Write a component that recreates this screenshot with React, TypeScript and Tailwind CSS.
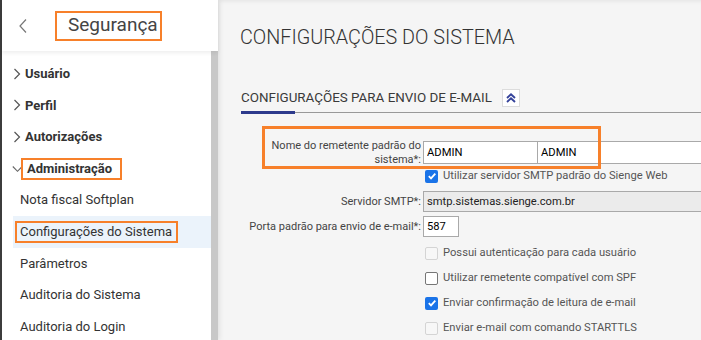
import type { ReactNode } from 'react'

const ORANGE = 'border-[#f7802a]'

function ChevronRight() {
  return (
    <svg width="8" height="12" viewBox="0 0 8 12" className="shrink-0">
      <path d="M1.5 1 L6.5 6 L1.5 11" fill="none" stroke="#555" strokeWidth="1.2" />
    </svg>
  )
}

function ChevronDown() {
  return (
    <svg width="11" height="8" viewBox="0 0 11 8" className="shrink-0">
      <path d="M0.8 1.5 L5.5 6.3 L10.2 1.5" fill="none" stroke="#666" strokeWidth="1.1" />
    </svg>
  )
}

type Check = 'on' | 'off' | 'disabled'

function Checkbox({ state }: { state: Check }) {
  if (state === 'on') {
    return (
      <span className="flex h-[13px] w-[13px] items-center justify-center rounded-[2px] bg-[#1a73e8]">
        <svg width="10" height="10" viewBox="0 0 10 10">
          <path d="M1.8 5.2 L4 7.4 L8.3 2.6" fill="none" stroke="#fff" strokeWidth="1.8" />
        </svg>
      </span>
    )
  }
  if (state === 'disabled') {
    return <span className="h-[13px] w-[13px] rounded-[2px] border border-[#d4d4d4] bg-[#f7f7f7]" />
  }
  return <span className="h-[13px] w-[13px] rounded-[2px] border border-[#767676] bg-white" />
}

function CheckRow({ state, label, h }: { state: Check; label: string; h: string }) {
  return (
    <div className={`flex items-center ${h}`}>
      <div className="w-[175px] shrink-0" />
      <div className="ml-[1px] flex items-center gap-[5px]">
        <Checkbox state={state} />
        <span className="text-[11.2px] text-[#555]">{label}</span>
      </div>
    </div>
  )
}

function FieldRow({ label, children, h }: { label: ReactNode; children: ReactNode; h: string }) {
  return (
    <div className={`flex items-center ${h}`}>
      <div className="w-[172px] shrink-0 text-right text-[11px] leading-[14px] whitespace-nowrap text-[#444]">{label}</div>
      <div className="ml-[2px] flex">{children}</div>
    </div>
  )
}

const menu = [
  { label: 'Usuário', kind: 'group' },
  { label: 'Perfil', kind: 'group' },
  { label: 'Autorizações', kind: 'group' },
  { label: 'Administração', kind: 'open' },
  { label: 'Nota fiscal Softplan', kind: 'item' },
  { label: 'Configurações do Sistema', kind: 'active' },
  { label: 'Parâmetros', kind: 'item' },
  { label: 'Auditoria do Sistema', kind: 'item' },
  { label: 'Auditoria do Login', kind: 'item' },
]

export default function App() {
  return (
    <div
      className="flex h-[340px] w-[701px] overflow-hidden bg-[#f5f5f5] text-[#333]"
      style={{ fontFamily: 'Roboto, "Noto Sans", sans-serif' }}
    >
      {/* Sidebar */}
      <aside className="relative z-10 flex w-[218px] shrink-0 flex-col border-l-[2px] border-[#3c3c3c] bg-white shadow-[2px_0_5px_rgba(0,0,0,0.08)]">
        <div className="relative z-10 flex h-[51px] shrink-0 items-center shadow-[0_2px_4px_rgba(0,0,0,0.07)]">
          <svg width="10" height="16" viewBox="0 0 10 16" className="ml-[16px]">
            <path d="M8 1.5 L2 8 L8 14.5" fill="none" stroke="#777" strokeWidth="1.2" />
          </svg>
          <div className={`ml-[27px] flex h-[30px] w-[107px] items-center border-[2px] ${ORANGE} pl-[11px] text-[19px] text-[#444]`}>
            Segurança
          </div>
        </div>
        <div className="flex min-h-0 flex-1">
          <div className="flex-1 pt-[7px]">
            {menu.map(m => {
              if (m.kind === 'group') {
                return (
                  <div key={m.label} className="flex h-[31.6px] items-center gap-[4px] pl-[11px] text-[13px] font-bold">
                    <ChevronRight />
                    <span>{m.label}</span>
                  </div>
                )
              }
              if (m.kind === 'open') {
                return (
                  <div key={m.label} className="flex h-[31.6px] items-center pl-[10px] text-[13px] font-bold">
                    <ChevronDown />
                    <span className={`ml-[-2px] flex h-[22px] items-center border-[2px] ${ORANGE} pl-[4px] pr-[8px]`}>
                      {m.label}
                    </span>
                  </div>
                )
              }
              if (m.kind === 'active') {
                return (
                  <div key={m.label} className="ml-[11px] flex h-[31.6px] items-center bg-[#ebf3fb] pl-[2px] text-[13px]">
                    <span className={`flex h-[22px] items-center border-[2px] ${ORANGE} pl-[3px] pr-[4px]`}>
                      {m.label}
                    </span>
                  </div>
                )
              }
              return (
                <div key={m.label} className="flex h-[31.6px] items-center pl-[18px] text-[13px]">
                  {m.label}
                </div>
              )
            })}
          </div>
          <div className="w-[7px] shrink-0 bg-[#c8c8c8]" />
        </div>
      </aside>

      {/* Main */}
      <main className="relative min-w-0 flex-1 pl-[23px] shadow-[inset_0_4px_4px_-3px_rgba(0,0,0,0.08)]">
        <h1 className="mt-[25px] ml-[-1px] text-[19.8px] leading-[26px] font-light text-[#333]">
          CONFIGURAÇÕES DO SISTEMA
        </h1>

        <div className="mt-[38px] flex items-center">
          <span className="text-[13.4px] leading-[18px] text-[#3a3a3a]">CONFIGURAÇÕES PARA ENVIO DE E-MAIL</span>
          <span className="ml-[10px] flex h-[18px] w-[18px] items-center justify-center border border-[#dcdcdc] bg-white">
            <svg width="12" height="12" viewBox="0 0 12 12">
              <path d="M2 6 L6 2.3 L10 6 M2 10 L6 6.3 L10 10" fill="none" stroke="#34429a" strokeWidth="1.9" />
            </svg>
          </span>
        </div>
        <div className="mt-[5px] h-px bg-[#999]">
          <div className="relative top-[-1px] h-[3px] w-[54px] bg-[#2d3a8c]" />
        </div>

        <div className="mt-[28px] ml-[8px] flex flex-col">
          <FieldRow h="h-[23px]" label={<>Nome do remetente padrão do<br />sistema*:</>}>
            <input
              readOnly
              value="ADMIN"
              className="h-[23px] w-[115px] border border-[#a9a9a9] bg-white px-[3px] text-[11.2px] text-black outline-none"
            />
            <input
              readOnly
              value="ADMIN"
              className="h-[23px] w-[200px] border border-l-0 border-[#a9a9a9] bg-white px-[3px] text-[11.2px] text-black outline-none"
            />
          </FieldRow>
          <CheckRow h="h-[25px]" state="on" label="Utilizar servidor SMTP padrão do Sienge Web" />
          <FieldRow h="h-[21px] mt-[2px]" label="Servidor SMTP*:">
            <input
              readOnly
              value="smtp.sistemas.sienge.com.br"
              className="h-[21px] w-[300px] border border-[#a9a9a9] bg-[#ebebeb] px-[3px] text-[11.2px] text-[#222] outline-none"
            />
          </FieldRow>
          <FieldRow h="h-[21px] mt-[4px]" label="Porta padrão para envio de e-mail*:">
            <input
              readOnly
              value="587"
              className="h-[21px] w-[36px] border border-[#a9a9a9] bg-white px-[3px] text-[11.2px] text-black outline-none"
            />
          </FieldRow>
          <CheckRow h="h-[25px] mt-[4px]" state="disabled" label="Possui autenticação para cada usuário" />
          <CheckRow h="h-[25px]" state="off" label="Utilizar remetente compatível com SPF" />
          <CheckRow h="h-[25px]" state="on" label="Enviar confirmação de leitura de e-mail" />
          <CheckRow h="h-[25px]" state="disabled" label="Enviar e-mail com comando STARTTLS" />
        </div>

        {/* annotation box over the sender-name field */}
        <div className={`pointer-events-none absolute top-[126px] left-[44px] h-[43px] w-[339px] border-[3px] ${ORANGE}`} />
      </main>
    </div>
  )
}
